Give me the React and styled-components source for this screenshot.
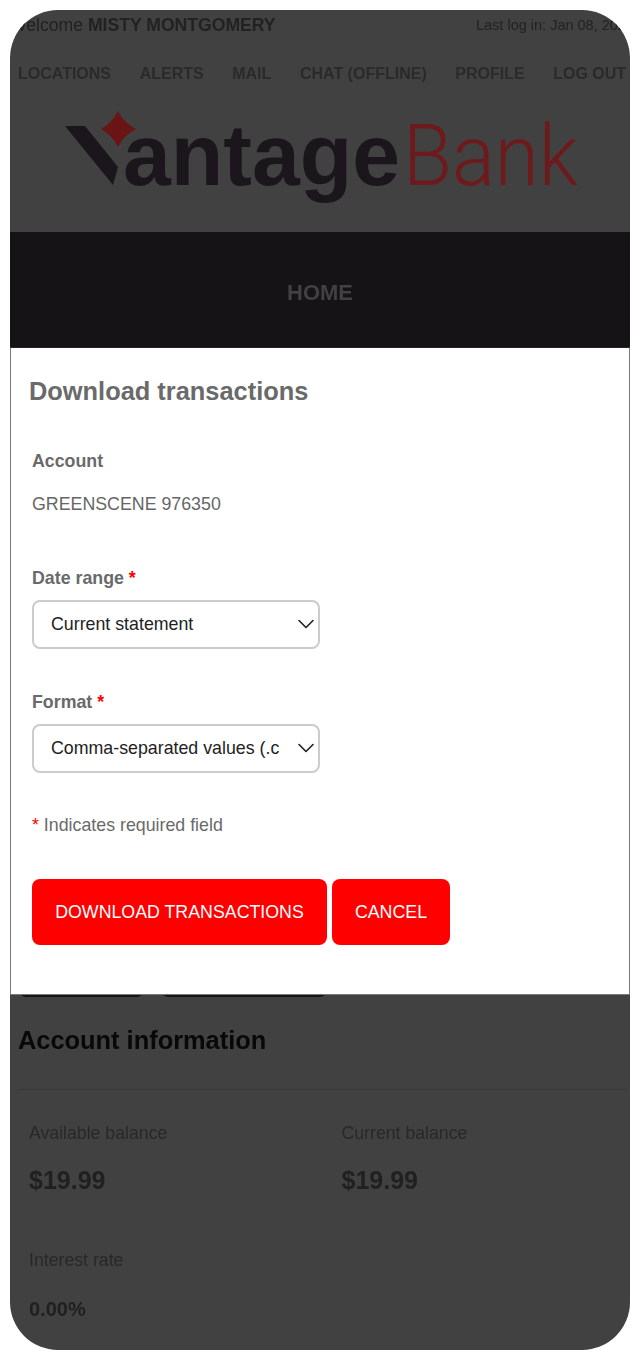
import React from 'react';
import styled, { createGlobalStyle } from 'styled-components';
import { ChevronDown } from 'lucide-react';

const Global = createGlobalStyle`
    html, body {
        margin: 0;
        background: #fff;
    }
    body {
        font-family: 'Liberation Sans', Arial, sans-serif;
    }
`

const Frame = styled.div`
    position: relative;
    width: 620px;
    height: 1340px;
    margin: 10px;
    border-radius: 48px;
    overflow: hidden;
    background: #414141;
    color: #222;
    filter: blur(0.35px);
`
const TopBar = styled.div`
    display: flex;
    justify-content: space-between;
    align-items: center;
    height: 28px;
    padding-top: 1px;
    font-size: 17.6px;
    white-space: nowrap;
    overflow: hidden;
    b {
        font-weight: bold;
    }
`
const LastLogin = styled.span`
    font-size: 14.5px;
    flex: none;
    margin-right: -4px;
`
const Nav = styled.nav`
    display: flex;
    gap: 28.6px;
    padding: 26px 0 0 8px;
    font-size: 16px;
    font-weight: bold;
    color: #2a2a2a;
    white-space: nowrap;
`
const LogoSvg = styled.svg`
    display: block;
    margin: 24px 0 0 50px;
`
const HomeBand = styled.div`
    display: flex;
    align-items: center;
    justify-content: center;
    box-sizing: border-box;
    height: 115px;
    margin-top: 25px;
    padding-top: 6px;
    background: #161316;
    color: #414141;
    font-size: 22px;
    font-weight: bold;
`
const PageButtons = styled.div`
    display: flex;
    gap: 19px;
    height: 12px;
    margin: 638px 0 0 10px;
`
const PageButton = styled.div`
    width: ${p => p.$width}px;
    background: #141414;
    border-radius: 6px;
`
const AccountHead = styled.h2`
    margin: 28px 0 0 8px;
    font-size: 25.4px;
    line-height: 30px;
    color: #080808;
`
const Rule = styled.hr`
    margin: 34px 4px 0 8px;
    border: 0;
    border-top: 1px solid #383838;
`
const Stats = styled.div`
    display: grid;
    grid-template-columns: 312.5px 1fr;
    row-gap: 54px;
    padding: 32px 0 0 19px;
`
const StatLabel = styled.div`
    font-size: 17.7px;
    line-height: 22px;
    color: #282828;
`
const StatValue = styled.div`
    margin-top: ${p => p.$small ? '23px' : '21px'};
    font-size: ${p => p.$small ? '20px' : '25px'};
    line-height: 30px;
    font-weight: bold;
    color: #202020;
`

const Modal = styled.div`
    position: absolute;
    top: 337px;
    left: 0;
    right: 0;
    height: 648px;
    box-sizing: border-box;
    padding: 28px 21px 0 21px;
    background: #fff;
    border: 1px solid #7a7a7a;
    border-top-color: #222;
    color: #6a6a6a;
`
const ModalTitle = styled.h1`
    margin: 0 0 0 -3px;
    font-size: 25.4px;
    line-height: 30px;
    font-weight: bold;
`
const FieldLabel = styled.div`
    margin-top: ${p => p.$top}px;
    font-size: 17.8px;
    line-height: 22px;
    font-weight: bold;
`
const Required = styled.span`
    color: #f00;
`
const AccountValue = styled.div`
    margin-top: 21px;
    font-size: 17.8px;
    line-height: 22px;
    color: #666;
`
const SelectWrap = styled.div`
    position: relative;
    width: 288px;
    height: 49px;
    margin-top: 11px;
    svg {
        position: absolute;
        right: 0;
        top: 10px;
        pointer-events: none;
    }
`
const Select = styled.select`
    appearance: none;
    -webkit-appearance: none;
    display: block;
    width: 100%;
    height: 100%;
    box-sizing: border-box;
    padding: 0 39px 2px 17px;
    border: 2px solid #ccc;
    border-radius: 8px;
    background: #fff;
    font-family: inherit;
    font-size: 17.8px;
    color: #222;
`
const Note = styled.div`
    margin-top: 41px;
    font-size: 17.8px;
    line-height: 22px;
    color: #6a6a6a;
`
const Actions = styled.div`
    display: flex;
    gap: 5px;
    margin-top: 43px;
`
const Action = styled.button`
    height: 66px;
    width: ${p => p.$width}px;
    padding: 0;
    border: 0;
    border-radius: 8px;
    background: #f00;
    color: #fff;
    font-family: inherit;
    font-size: 17.8px;
    text-transform: uppercase;
`

const Logo = () => (
    <LogoSvg width="520" height="100" viewBox="60 108 520 100">
        <polygon points="65,127 85,127 118,168 113,186" fill="#1b161b" />
        <path d="M118 112 Q124 124 136 130 Q124 136 118 148 Q112 136 101 130 Q112 124 118 112 Z" fill="#6a1416" />
        <text x="123" y="186" fontFamily="'Liberation Sans', sans-serif" fontWeight="bold" fontSize="88" fill="#1b161b" textLength="277" lengthAdjust="spacingAndGlyphs">antage</text>
        <text x="403" y="186" fontFamily="Roboto, sans-serif" fontWeight="300" fontSize="86" fill="#6e1a1c" textLength="175" lengthAdjust="spacingAndGlyphs">Bank</text>
    </LogoSvg>
);

const App = () => (
    <>
        <Global />
        <Frame>
            <TopBar>
                <span>Welcome <b>MISTY MONTGOMERY</b></span>
                <LastLogin>Last log in: Jan 08, 2024</LastLogin>
            </TopBar>
            <Nav>
                <span>LOCATIONS</span>
                <span>ALERTS</span>
                <span>MAIL</span>
                <span>CHAT (OFFLINE)</span>
                <span>PROFILE</span>
                <span>LOG OUT</span>
            </Nav>
            <Logo />
            <HomeBand>HOME</HomeBand>
            <PageButtons>
                <PageButton $width={123} />
                <PageButton $width={164} />
            </PageButtons>
            <AccountHead>Account information</AccountHead>
            <Rule />
            <Stats>
                <div>
                    <StatLabel>Available balance</StatLabel>
                    <StatValue>$19.99</StatValue>
                </div>
                <div>
                    <StatLabel>Current balance</StatLabel>
                    <StatValue>$19.99</StatValue>
                </div>
                <div>
                    <StatLabel>Interest rate</StatLabel>
                    <StatValue $small>0.00%</StatValue>
                </div>
            </Stats>

            <Modal>
                <ModalTitle>Download transactions</ModalTitle>
                <FieldLabel $top={44}>Account</FieldLabel>
                <AccountValue>GREENSCENE 976350</AccountValue>
                <FieldLabel $top={52}>Date range <Required>*</Required></FieldLabel>
                <SelectWrap>
                    <Select defaultValue="current">
                        <option value="current">Current statement</option>
                    </Select>
                    <ChevronDown size={28} color="#222" strokeWidth={1.4} />
                </SelectWrap>
                <FieldLabel $top={42}>Format <Required>*</Required></FieldLabel>
                <SelectWrap>
                    <Select defaultValue="csv">
                        <option value="csv">Comma-separated values (.csv)</option>
                    </Select>
                    <ChevronDown size={28} color="#222" strokeWidth={1.4} />
                </SelectWrap>
                <Note><Required>*</Required> Indicates required field</Note>
                <Actions>
                    <Action $width={295}>Download transactions</Action>
                    <Action $width={118}>Cancel</Action>
                </Actions>
            </Modal>
        </Frame>
    </>
);

export default App;
